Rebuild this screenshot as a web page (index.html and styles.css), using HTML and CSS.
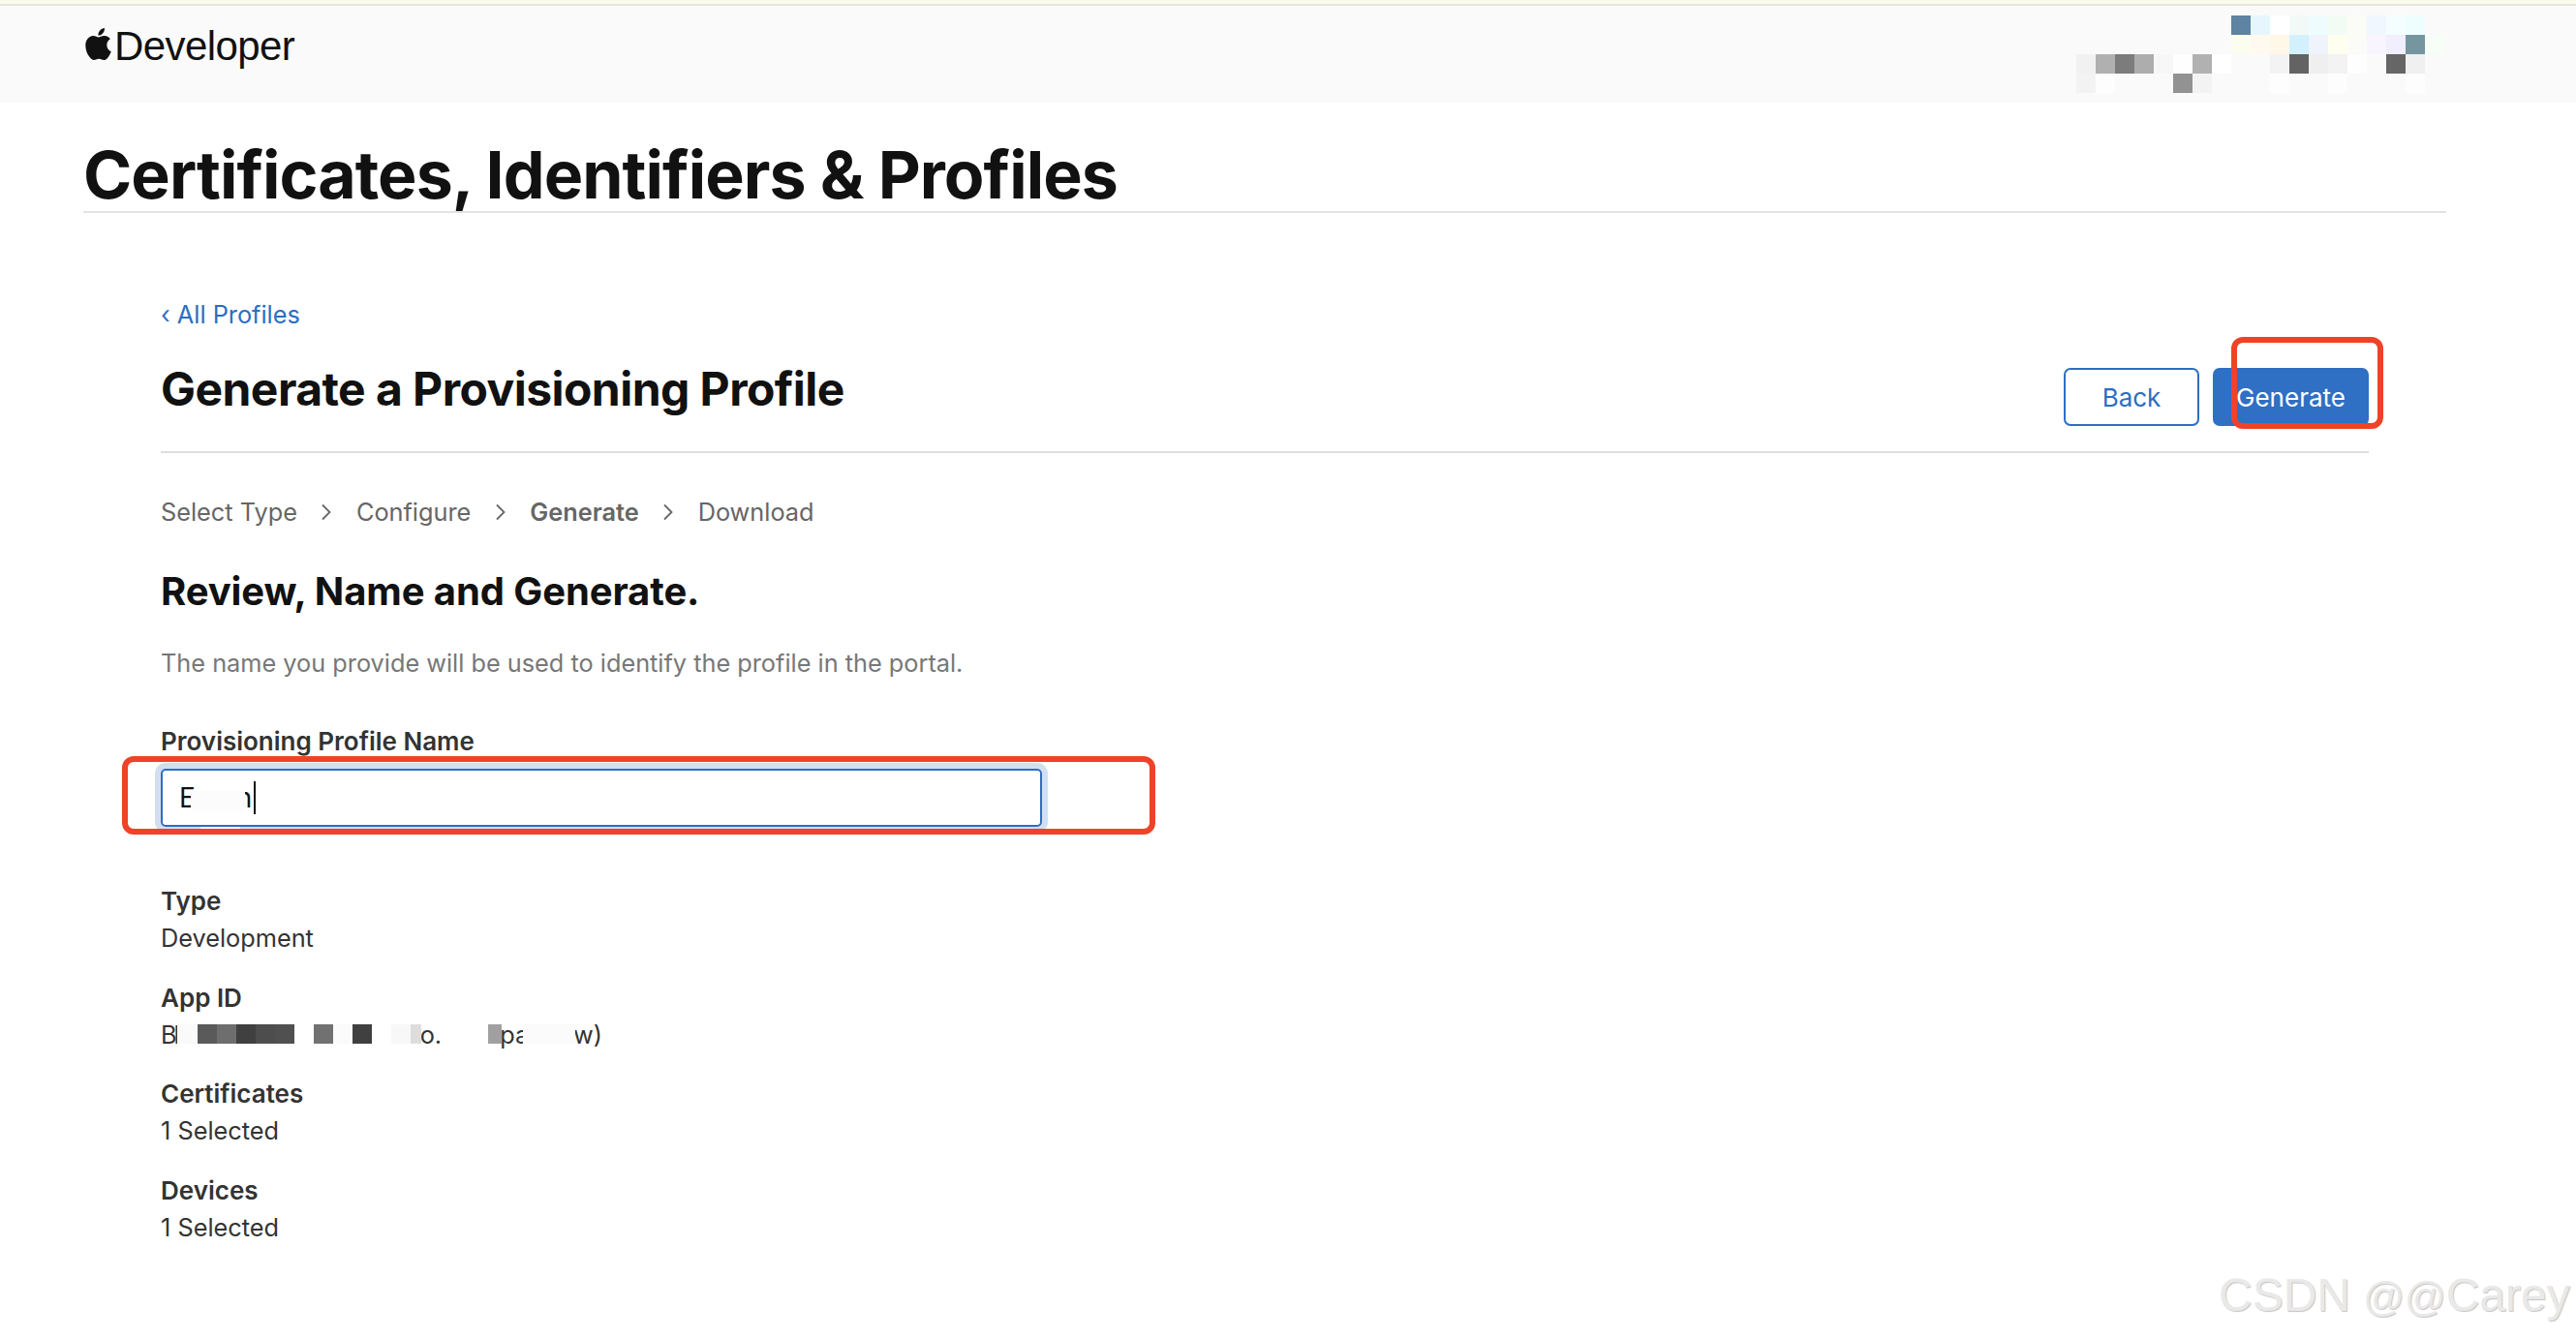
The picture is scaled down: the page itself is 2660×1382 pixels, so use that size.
FILE: index.html
```html
<!DOCTYPE html>
<html lang="en">
<head>
    <meta charset="UTF-8">
    <title>Certificates, Identifiers &amp; Profiles</title>
    <link rel="stylesheet" href="styles.css">
</head>
<body>
<div class="notice-strip"></div>
<header class="topbar">
    <svg class="apple" viewBox="2 0 20 24" preserveAspectRatio="none"><path d="M12.152 6.896c-.948 0-2.415-1.078-3.96-1.04-2.04.027-3.91 1.183-4.961 3.014-2.117 3.675-.546 9.103 1.519 12.09 1.013 1.454 2.208 3.09 3.792 3.039 1.52-.065 2.09-.987 3.935-.987 1.831 0 2.35.987 3.96.948 1.637-.026 2.676-1.48 3.676-2.948 1.156-1.688 1.636-3.325 1.662-3.415-.039-.013-3.182-1.221-3.22-4.857-.026-3.04 2.48-4.494 2.597-4.559-1.429-2.09-3.623-2.324-4.39-2.376-2-.156-3.675 1.09-4.61 1.09zM15.53 3.83c.843-1.012 1.4-2.427 1.245-3.83-1.207.052-2.662.805-3.532 1.818-.78.896-1.454 2.338-1.273 3.714 1.338.104 2.715-.688 3.559-1.701"/></svg>
    <span class="brand">Developer</span>
</header>
<svg class="mosaic-top" width="380" height="80" viewBox="0 0 19 4" preserveAspectRatio="none" shape-rendering="crispEdges">
    <rect x="8" y="0" width="1" height="1" fill="#5f83a3"/><rect x="9" y="0" width="1" height="1" fill="#e6f6fe"/><rect x="10" y="0" width="1" height="1" fill="#fff"/><rect x="11" y="0" width="1" height="1" fill="#f1faf6"/><rect x="12" y="0" width="1" height="1" fill="#effcfe"/><rect x="13" y="0" width="1" height="1" fill="#f2fcf5"/><rect x="14" y="0" width="1" height="1" fill="#fbfcf5"/><rect x="15" y="0" width="1" height="1" fill="#f0f7fe"/><rect x="16" y="0" width="1" height="1" fill="#f5feff"/><rect x="17" y="0" width="1" height="1" fill="#eefeff"/>
    <rect x="8" y="1" width="1" height="1" fill="#fbfeef"/><rect x="9" y="1" width="1" height="1" fill="#fff9ef"/><rect x="10" y="1" width="1" height="1" fill="#fff8e8"/><rect x="11" y="1" width="1" height="1" fill="#d2f1fd"/><rect x="12" y="1" width="1" height="1" fill="#eef3fc"/><rect x="13" y="1" width="1" height="1" fill="#fffff0"/><rect x="14" y="1" width="1" height="1" fill="#fbfbf7"/><rect x="15" y="1" width="1" height="1" fill="#f8f5fe"/><rect x="16" y="1" width="1" height="1" fill="#f1eefd"/><rect x="17" y="1" width="1" height="1" fill="#76969f"/><rect x="18" y="1" width="1" height="1" fill="#f7fdf7"/>
    <rect x="0" y="2" width="1" height="1" fill="#f1f1f1"/><rect x="1" y="2" width="1" height="1" fill="#b0b0b0"/><rect x="2" y="2" width="1" height="1" fill="#7c7c7c"/><rect x="3" y="2" width="1" height="1" fill="#adadad"/><rect x="4" y="2" width="1" height="1" fill="#f7f7f7"/><rect x="5" y="2" width="1" height="1" fill="#fefefe"/><rect x="6" y="2" width="1" height="1" fill="#b1b1b1"/><rect x="7" y="2" width="1" height="1" fill="#fff"/><rect x="10" y="2" width="1" height="1" fill="#f3f3f3"/><rect x="11" y="2" width="1" height="1" fill="#636363"/><rect x="12" y="2" width="1" height="1" fill="#efefef"/><rect x="13" y="2" width="1" height="1" fill="#f3f3f3"/><rect x="14" y="2" width="1" height="1" fill="#fefefe"/><rect x="16" y="2" width="1" height="1" fill="#666"/><rect x="17" y="2" width="1" height="1" fill="#f0f0f0"/>
    <rect x="0" y="3" width="1" height="1" fill="#f3f3f3"/><rect x="1" y="3" width="1" height="1" fill="#fdfdfd"/><rect x="5" y="3" width="1" height="1" fill="#929292"/><rect x="6" y="3" width="1" height="1" fill="#f3f3f3"/><rect x="10" y="3" width="1" height="1" fill="#fdfdfd"/><rect x="13" y="3" width="1" height="1" fill="#fdfdfd"/><rect x="17" y="3" width="1" height="1" fill="#fdfdfd"/>
</svg>

<div class="page-title">
    <h1>Certificates, Identifiers &amp; Profiles</h1>
</div>

<main class="content">
    <a class="back-link" href="#">&#8249; All Profiles</a>
    <div class="head-row">
        <h2>Generate a Provisioning Profile</h2>
        <div class="actions">
            <button type="button" class="btn btn-outline">Back</button>
            <button type="button" class="btn btn-primary">Generate</button>
        </div>
    </div>

    <nav class="steps">
        <span>Select Type</span>
        <svg class="chev" viewBox="0 0 12 18"><path d="M2 1.5l7.5 7.5-7.5 7.5"/></svg>
        <span>Configure</span>
        <svg class="chev" viewBox="0 0 12 18"><path d="M2 1.5l7.5 7.5-7.5 7.5"/></svg>
        <span class="current">Generate</span>
        <svg class="chev" viewBox="0 0 12 18"><path d="M2 1.5l7.5 7.5-7.5 7.5"/></svg>
        <span>Download</span>
    </nav>

    <h3>Review, Name and Generate.</h3>
    <p class="hint">The name you provide will be used to identify the profile in the portal.</p>

    <label class="field-label">Provisioning Profile Name</label>
    <div class="name-input">
        <span class="typed">E</span><span class="typed typed-tail">n</span><span class="caret"></span>
        <span class="blur-patch"></span>
        <span class="blur-bump"></span>
    </div>

    <dl class="facts">
        <div>
            <dt>Type</dt>
            <dd>Development</dd>
        </div>
        <div>
            <dt>App ID</dt>
            <dd class="app-id">
                <span class="frag-b">Bl</span><span class="frag-o">o.</span><span class="frag-pa">pa</span><span class="frag-w">w)</span>
                <svg class="mosaic-id" width="420" height="20" viewBox="0 0 420 20" shape-rendering="crispEdges">
                    <rect x="3" width="20" height="20" fill="#fafafa"/><rect x="24" width="20" height="20" fill="#5a5a5a"/><rect x="44" width="20" height="20" fill="#6e6e6e"/><rect x="64" width="20" height="20" fill="#404040"/><rect x="84" width="20" height="20" fill="#4d4d4d"/><rect x="104" width="20" height="20" fill="#505050"/><rect x="144" width="20" height="20" fill="#717171"/><rect x="164" width="20" height="20" fill="#fbfbfb"/><rect x="184" width="20" height="20" fill="#404040"/><rect x="224" width="20" height="20" fill="#f8f8f8"/><rect x="244" width="11" height="20" fill="#ddd"/><rect x="324" width="14" height="20" fill="#a0a0a0"/><rect x="360" width="54" height="20" fill="#fbfbfb"/>
                </svg>
            </dd>
        </div>
        <div>
            <dt>Certificates</dt>
            <dd>1 Selected</dd>
        </div>
        <div>
            <dt>Devices</dt>
            <dd>1 Selected</dd>
        </div>
    </dl>
</main>

<div class="mark mark-generate"></div>
<div class="mark mark-input"></div>
<div class="watermark">CSDN <span class="at-signs">@@</span>Carey</div>
</body>
</html>
```

FILE: styles.css
```css
html, body {
    margin: 0;
    padding: 0;
    background: #fff;
}

body {
    position: relative;
    height: 1382px;
    overflow: hidden;
    font-family: Inter, "Liberation Sans", sans-serif;
    color: #333;
}

.notice-strip {
    height: 4px;
    background: #fafbea;
    border-bottom: 2px solid #e4e6d8;
}

.topbar {
    display: flex;
    align-items: flex-start;
    height: 100px;
    background: #fafafa;
    padding-left: 88px;
    box-sizing: border-box;
}

.apple {
    width: 27px;
    height: 33px;
    margin-top: 23px;
    fill: #111;
}

.brand {
    margin-left: 3px;
    margin-top: 19px;
    font-family: "Liberation Sans", sans-serif;
    font-size: 42px;
    line-height: 46px;
    letter-spacing: -0.6px;
    color: #111;
}

.mosaic-top {
    position: absolute;
    left: 2144px;
    top: 16px;
}

.page-title {
    margin: 0 134px 0 86px;
    height: 112px;
    border-bottom: 2px solid #e2e2e2;
}

h1 {
    margin: 0;
    padding-top: 36px;
    font-size: 68px;
    line-height: 76px;
    font-weight: 700;
    letter-spacing: -0.95px;
    color: #111;
}

.content {
    margin: 0 214px 0 166px;
}

.back-link {
    display: block;
    margin-top: 88px;
    font-size: 25.3px;
    line-height: 34px;
    color: #2d6ec0;
    text-decoration: none;
}

.head-row {
    display: flex;
    justify-content: space-between;
    align-items: flex-start;
    height: 96px;
    margin-top: 30px;
    border-bottom: 2px solid #dedede;
    box-sizing: border-box;
}

h2 {
    margin: 2px 0 0;
    font-size: 48px;
    line-height: 56px;
    font-weight: 700;
    letter-spacing: -0.55px;
    color: #111;
}

.actions {
    display: flex;
    gap: 14px;
    margin-top: 8px;
}

.btn {
    height: 60px;
    border-radius: 7px;
    font-family: inherit;
    font-size: 26px;
}

.btn-outline {
    width: 140px;
    background: #fff;
    border: 2px solid #2d6ec0;
    color: #2d6ec0;
}

.btn-primary {
    width: 161px;
    background: #2f6fc4;
    border: 2px solid #2f6fc4;
    color: #fff;
}

.steps {
    display: flex;
    align-items: center;
    margin-top: 44px;
    font-size: 25.3px;
    line-height: 34px;
    color: #666;
}

.steps .current {
    font-weight: 600;
}

.chev {
    width: 12px;
    height: 18px;
    margin: 0 24.5px;
    fill: none;
    stroke: #666;
    stroke-width: 1.8;
}

h3 {
    margin: 40px 0 0;
    font-size: 40px;
    line-height: 50px;
    font-weight: 700;
    letter-spacing: -0.1px;
    color: #111;
}

.hint {
    margin: 32px 0 0;
    font-size: 25.3px;
    line-height: 34px;
    color: #777;
}

.field-label {
    display: block;
    margin-top: 47px;
    font-size: 26px;
    line-height: 34px;
    font-weight: 600;
}

.name-input {
    position: relative;
    display: flex;
    align-items: center;
    width: 910px;
    height: 60px;
    margin-top: 11px;
    padding-left: 17px;
    box-sizing: border-box;
    border: 2px solid #2d6ec0;
    border-radius: 5px;
    box-shadow: 0 0 0 6px #d3dff0;
    font-size: 28px;
    color: #111;
}

.typed-tail {
    margin-left: 42px;
}

.caret {
    width: 2px;
    height: 34px;
    margin-left: 2px;
    background: #111;
}

.blur-patch {
    position: absolute;
    left: 29px;
    top: 21px;
    width: 56px;
    height: 21px;
    background: #fcfcfc;
}

.blur-bump {
    position: absolute;
    left: 39px;
    top: 58px;
    width: 41px;
    height: 5px;
    border-radius: 0 0 8px 8px;
    background: #fff;
}

.facts {
    margin: 58px 0 0;
}

.facts div {
    height: 99.5px;
}

.facts dt {
    font-size: 26px;
    line-height: 38px;
    font-weight: 600;
}

.facts dd {
    margin: 0;
    font-size: 25.3px;
    line-height: 38px;
}

.app-id {
    position: relative;
    display: flex;
}

.frag-b { letter-spacing: -3px; }
.frag-o { margin-left: 251px; }
.frag-pa { margin-left: 60px; }
.frag-w { margin-left: 46px; }

.mosaic-id {
    position: absolute;
    left: 14px;
    top: 8px;
}

.mark {
    position: absolute;
    border: 6px solid #ee4328;
    border-radius: 12px;
    box-sizing: border-box;
}

.mark-generate {
    left: 2304px;
    top: 348px;
    width: 157px;
    height: 95px;
}

.mark-input {
    left: 126px;
    top: 781px;
    width: 1067px;
    height: 81px;
}

.watermark {
    position: absolute;
    left: 2291px;
    top: 1306px;
    font-family: "Liberation Sans", sans-serif;
    font-size: 48px;
    line-height: 64px;
    white-space: nowrap;
    color: #e9e9e9;
    text-shadow: 1px 1px 1px #c4c4c4;
}

.at-signs {
    font-size: 42px;
}
```
